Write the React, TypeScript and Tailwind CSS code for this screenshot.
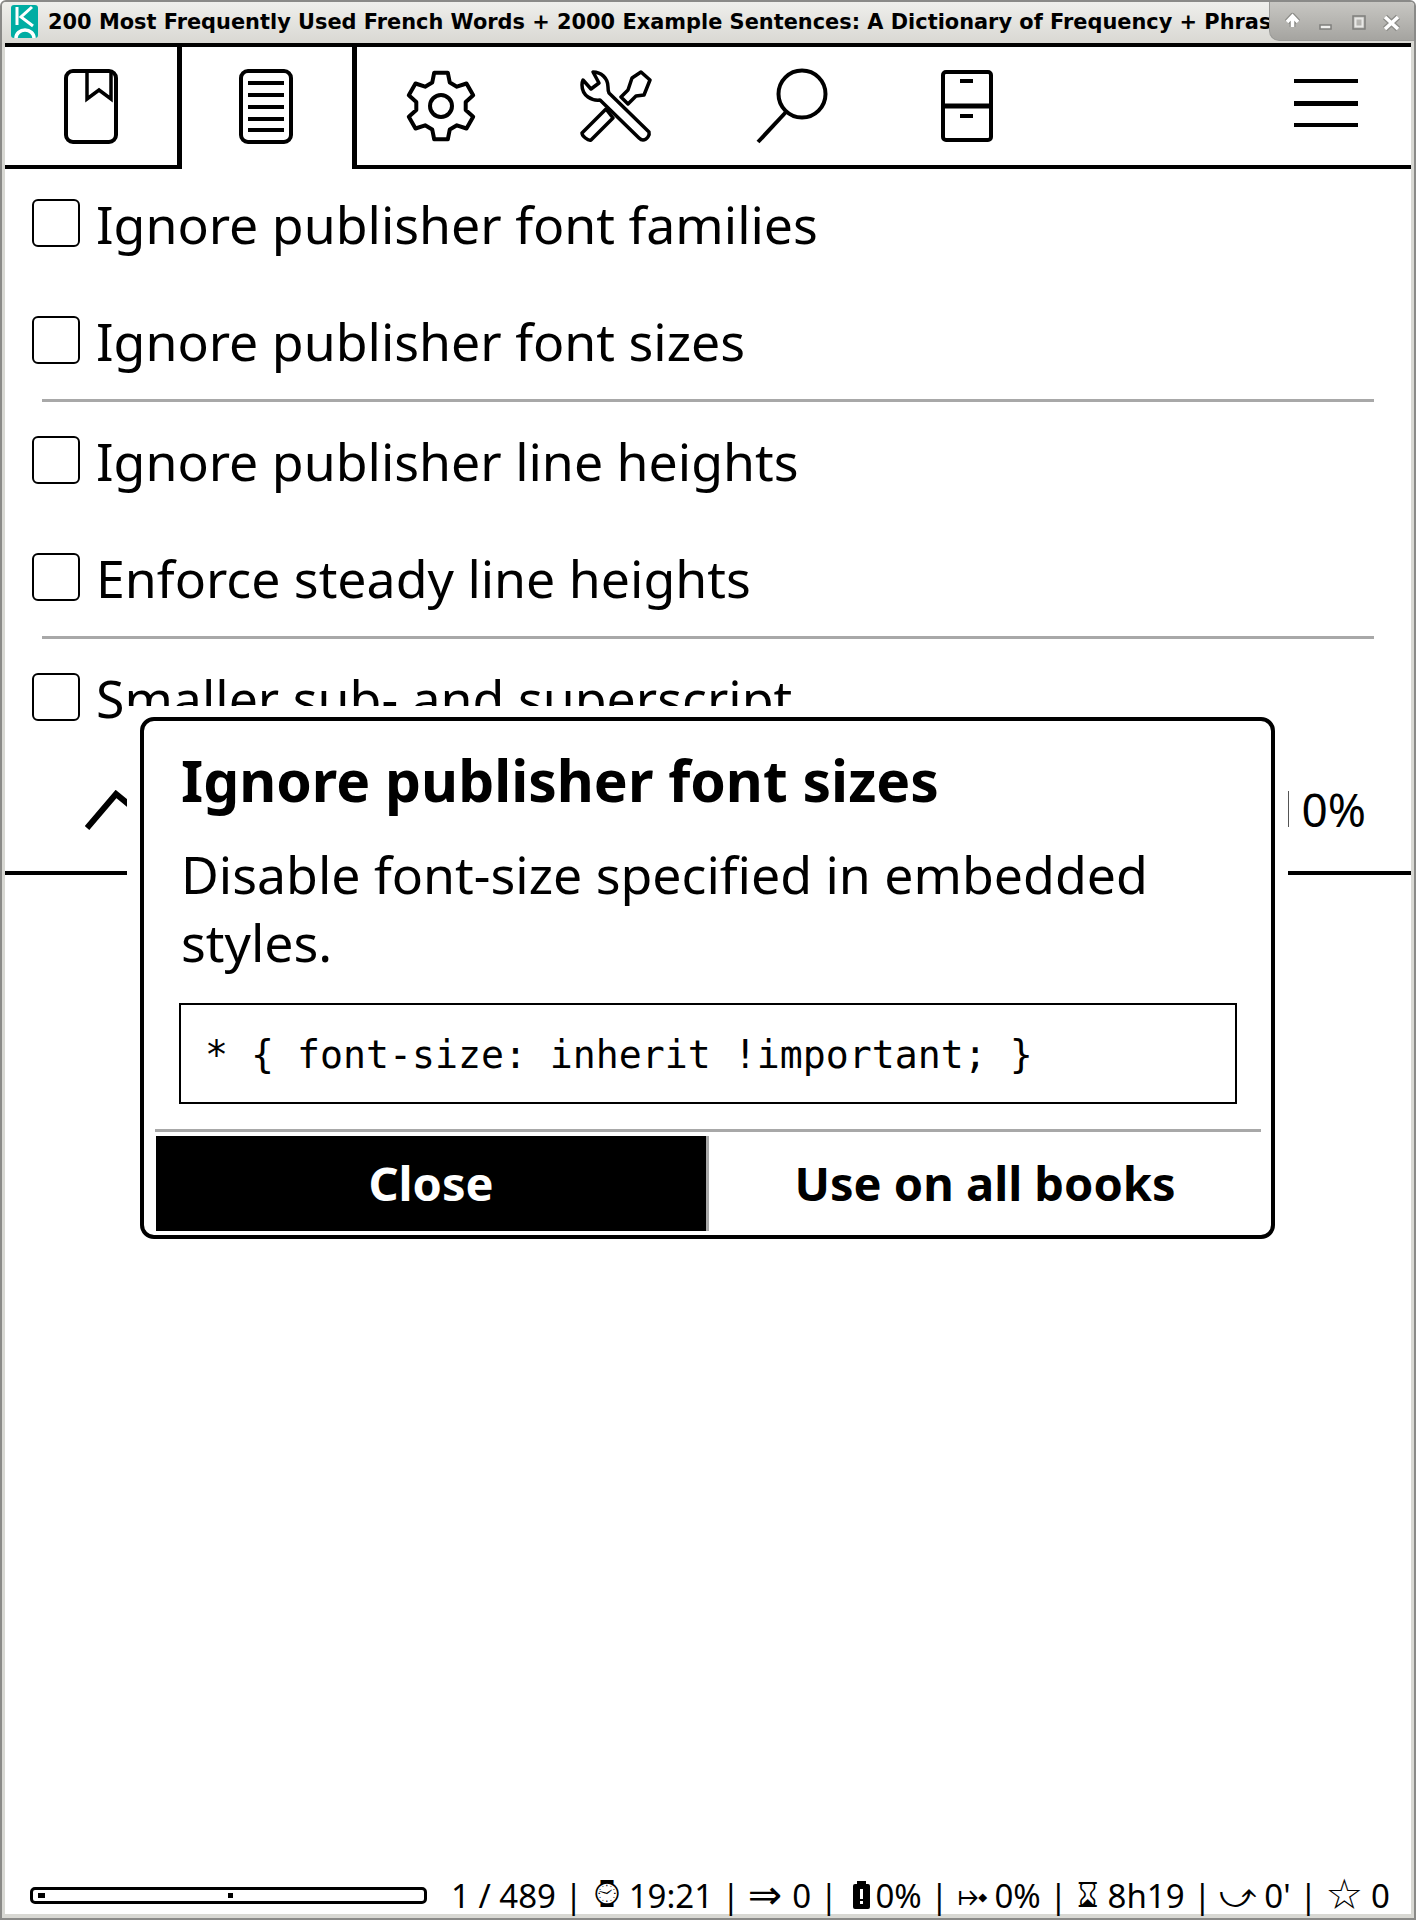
import React from 'react';

const gearPath = () => {
  const c = 36;
  const pts: string[] = [];
  for (let i = 0; i < 6; i++) {
    const a = (i * Math.PI) / 3 - Math.PI / 2;
    const at = (r: number, off: number) => {
      const t = a + off;
      return `${(c + r * Math.cos(t)).toFixed(1)} ${(c + r * Math.sin(t)).toFixed(1)}`;
    };
    pts.push(at(25, -0.36), at(34, -0.2), at(34, 0.2), at(25, 0.36));
  }
  return 'M' + pts.join('L') + 'Z';
};

function BookIcon() {
  return (
    <svg width="54" height="75" viewBox="0 0 54 75" fill="none" stroke="black" strokeWidth="4">
      <rect x="2" y="2" width="50" height="71" rx="7" />
      <path d="M23 2V30L35 21L47 30V2" strokeWidth="3.5" />
    </svg>
  );
}

function DocIcon() {
  return (
    <svg width="54" height="75" viewBox="0 0 54 75" fill="none" stroke="black" strokeWidth="4">
      <rect x="2" y="2" width="50" height="71" rx="7" />
      <path d="M9 14H45M9 26H45M9 38H45M9 50H45M9 61H45" />
    </svg>
  );
}

function GearIcon() {
  return (
    <svg width="72" height="72" viewBox="0 0 72 72" fill="none" stroke="black" strokeWidth="4" strokeLinejoin="round">
      <path d={gearPath()} />
      <circle cx="36" cy="36" r="11" />
    </svg>
  );
}

function ToolsIcon() {
  return (
    <svg width="72" height="72" viewBox="0 0 72 72" fill="none" stroke="black" strokeWidth="3.5" strokeLinejoin="round">
      <path d="M13 2C21 2 28 8 28 17C28 20 28 21 29 23L69 62C70 65 67 70 63 70C61 70 60 69 59 68L20 30C12 31 2 26 2 15C2 13 2 12 3 10L11 19L19 13Z" />
      <path d="M61 2L70 10L64 25L56 26L48 34L41 27L48 20L52 8Z" />
      <path d="M26 39L33 48L11 70C8 71 2 66 2 63Z" />
    </svg>
  );
}

function SearchIcon() {
  return (
    <svg width="72" height="76" viewBox="0 0 72 76" fill="none" stroke="black" strokeWidth="4" className="ml-[2px]">
      <circle cx="46" cy="26" r="23.5" />
      <path d="M30 44L2 74" />
    </svg>
  );
}

function CabinetIcon() {
  return (
    <svg width="52" height="72" viewBox="0 0 52 72" fill="none" stroke="black" strokeWidth="4" className="ml-[2px]">
      <rect x="2" y="2" width="48" height="68" rx="3" />
      <path d="M2 36H50" strokeWidth="5" />
      <path d="M19 11H32M19 46H32" />
    </svg>
  );
}

function MenuIcon() {
  return (
    <svg width="64" height="50" viewBox="0 0 64 50" fill="black">
      <rect x="0" y="0" width="64" height="4" />
      <rect x="0" y="22" width="64" height="5" />
      <rect x="0" y="44" width="64" height="4" />
    </svg>
  );
}

function Logo() {
  return (
    <svg width="27" height="33" viewBox="0 0 27 33">
      <rect x="0" y="0" width="27" height="33" rx="3" fill="#00ada3" />
      <path d="M6 2V20M21 2L10 12L22 21" fill="none" stroke="white" strokeWidth="3" />
      <ellipse cx="14" cy="33" rx="9" ry="8" fill="none" stroke="white" strokeWidth="3.5" />
    </svg>
  );
}

function WindowButtons() {
  return (
    <svg width="144" height="38" viewBox="0 0 144 38" fill="none">
      <path d="M22.5 25V16M17 20L22.5 14L28 20" stroke="#8c8c88" strokeWidth="6" strokeLinejoin="round" />
      <path d="M22.5 25V16M17 20L22.5 14L28 20" stroke="white" strokeWidth="3.5" />
      <rect x="50" y="23" width="11" height="4" fill="#efefed" stroke="#7f7f7c" strokeWidth="1.5" />
      <rect x="83" y="14" width="12" height="13" stroke="#7f7f7c" strokeWidth="1.5" />
      <rect x="85.5" y="16.5" width="7" height="8" stroke="#e8e8e6" strokeWidth="2" />
      <path d="M115 15L128 27M128 15L115 27" stroke="#8c8c88" strokeWidth="6" />
      <path d="M115 15L128 27M128 15L115 27" stroke="white" strokeWidth="3.5" />
    </svg>
  );
}

function Tab({ className, children }: { className: string; children: React.ReactNode }) {
  return <div className={'shrink-0 flex items-center justify-center ' + className}>{children}</div>;
}

function Row({ label }: { label: string }) {
  return (
    <div className="h-[117px] flex items-center px-[27px] gap-[16px]">
      <div className="w-[48px] h-[48px] shrink-0 border-2 border-black rounded-[6px] -mt-[6px]" />
      <div className="text-[51.8px] leading-[72px] whitespace-nowrap text-black -mt-[4px]">{label}</div>
    </div>
  );
}

function Separator() {
  return <div className="h-[3px] mx-[37px] -mt-[2px] mb-[2px] bg-[#a8a8a8]" />;
}

export default function App() {
  return (
    <div className="relative w-[1416px] h-[1920px] overflow-hidden bg-[#d8d8d3] font-['Noto_Sans',sans-serif] rounded-t-[6px] border-x-2 border-y-2 border-[#8a8a88]">
      <div className="h-[41px] flex items-center bg-gradient-to-b from-[#efefec] to-[#d9d8d3]">
        <div className="pl-[9px] shrink-0 flex -mt-[3px]">
          <Logo />
        </div>
        <div className="ml-[10px] w-[1222px] overflow-hidden whitespace-nowrap font-['DejaVu_Sans',sans-serif] font-bold text-[20.9px] text-black">
          200 Most Frequently Used French Words + 2000 Example Sentences: A Dictionary of Frequency + Phrasebook to Learn French
        </div>
        <div className="self-stretch flex-1 flex mb-[2px] bg-gradient-to-b from-[#c8c7c3] to-[#a5a4a0] rounded-bl-[10px] border-l border-b border-[#9a9a97]">
          <WindowButtons />
        </div>
      </div>

      <div className="mx-[3px] h-[1871px] flex flex-col bg-white border-t-4 border-black">
        <div className="h-[122px] flex shrink-0">
          <Tab className="w-[172px] border-b-4 border-black"><BookIcon /></Tab>
          <Tab className="w-[180px] pr-[2px] pb-[4px] border-x-[5px] border-black"><DocIcon /></Tab>
          <Tab className="w-[171px] pr-[3px] border-b-4 border-black"><GearIcon /></Tab>
          <Tab className="w-[175px] border-b-4 border-black"><ToolsIcon /></Tab>
          <Tab className="w-[175px] border-b-4 border-black"><SearchIcon /></Tab>
          <Tab className="w-[175px] border-b-4 border-black"><CabinetIcon /></Tab>
          <div className="flex-1 flex items-center justify-end pr-[53px] pb-[4px] border-b-4 border-black">
            <MenuIcon />
          </div>
        </div>

        <div className="-mt-[2px]">
          <Row label="Ignore publisher font families" />
          <Row label="Ignore publisher font sizes" />
          <Separator />
          <Row label="Ignore publisher line heights" />
          <Row label="Enforce steady line heights" />
          <Separator />
          <Row label="Smaller sub- and superscript" />
        </div>

        <div className="h-[117px] flex items-center justify-between border-b-4 border-black pl-[80px] pr-[45px] shrink-0">
          <svg width="48" height="40" viewBox="0 0 48 40" fill="none" stroke="black" strokeWidth="6" className="-mt-[10px]">
            <path d="M2 38L31 4L48 18" />
          </svg>
          <div className="flex items-center text-[46px] leading-none text-black -mt-[12px]">
            <div className="w-[2px] h-[36px] bg-[#555555] mr-[12px]" />
            0%
          </div>
        </div>

        <div className="flex-1" />

        <div className="h-[28px] flex items-center pl-[25px] pr-[26px] gap-[24px] shrink-0 mb-[5px]">
          <div className="relative w-[397px] h-[17px] border-[3px] border-black rounded-[5px] shrink-0">
            <div className="absolute left-[5px] top-[3px] w-[7px] h-[5px] bg-black" />
            <div className="absolute left-[195px] top-[3px] w-[5px] h-[5px] bg-black" />
          </div>
          <div className="flex-1 whitespace-nowrap text-[33px] leading-none text-black flex items-center justify-end">
            <span>1 / 489 | </span>
            <span className="font-['DejaVu_Sans',sans-serif] text-[40px] ml-[4px] mr-[2px]">{'\u231A\uFE0E'}</span>
            <span>19:21 | </span>
            <span className="font-['DejaVu_Sans',sans-serif] text-[41px] ml-[8px] mr-[10px]">⇒</span>
            <span>0 |&nbsp;</span>
            <svg width="17" height="28" viewBox="0 0 17 28" className="ml-[7px] mr-[5px]">
              <rect x="0" y="3" width="17" height="25" rx="2" fill="black" />
              <rect x="4" y="0" width="9" height="4" fill="black" />
              <rect x="7" y="8" width="3" height="10" fill="white" />
              <rect x="7" y="20" width="3" height="3" fill="white" />
            </svg>
            <span>0% | </span>
            <span className="font-['DejaVu_Sans',sans-serif] text-[37px] ml-[10px] mr-[6px]">⤠</span>
            <span>0% | </span>
            <span className="font-['DejaVu_Sans',sans-serif] text-[34px] ml-[9px] mr-[10px]">{'\u231B\uFE0E'}</span>
            <span>8h19 | </span>
            <span className="font-['DejaVu_Sans',sans-serif] text-[35px] mx-[8px]">⤻</span>
            <span>0' | </span>
            <span className="font-['DejaVu_Sans',sans-serif] text-[42px] mx-[8px]">☆</span>
            <span>0</span>
          </div>
        </div>
      </div>

      <div className="absolute left-[125px] top-[704px] w-[1161px] bg-white px-[13px] pt-[11px] pb-[13px]">
        <div className="h-[522px] border-[4px] border-black rounded-[14px] bg-white flex flex-col">
          <div className="pl-[37px] pt-[27px] font-bold text-[57px] leading-[64px] text-black whitespace-nowrap">Ignore publisher font sizes</div>
          <div className="pl-[37px] pr-[30px] pt-[28px] text-[51.8px] leading-[68px] text-black">
            Disable font-size specified in embedded styles.
          </div>
          <div className="ml-[35px] mr-[34px] mt-[27px] h-[101px] border-2 border-black flex items-center pl-[24px] pt-[4px] font-['DejaVu_Sans_Mono',monospace] text-[38.2px] text-black whitespace-pre">
            {'* { font-size: inherit !important; }'}
          </div>
          <div className="ml-[11px] mr-[10px] mt-[25px] h-[3px] bg-[#a8a8a8]" />
          <div className="ml-[12px] mr-[10px] mt-[4px] flex flex-1 mb-[4px]">
            <div className="w-[553px] flex items-center justify-center bg-black text-white font-bold text-[47px] border-r-[3px] border-[#a8a8a8]">
              Close
            </div>
            <div className="flex-1 flex items-center justify-center text-black font-bold text-[47px]">Use on all books</div>
          </div>
        </div>
      </div>
    </div>
  );
}
